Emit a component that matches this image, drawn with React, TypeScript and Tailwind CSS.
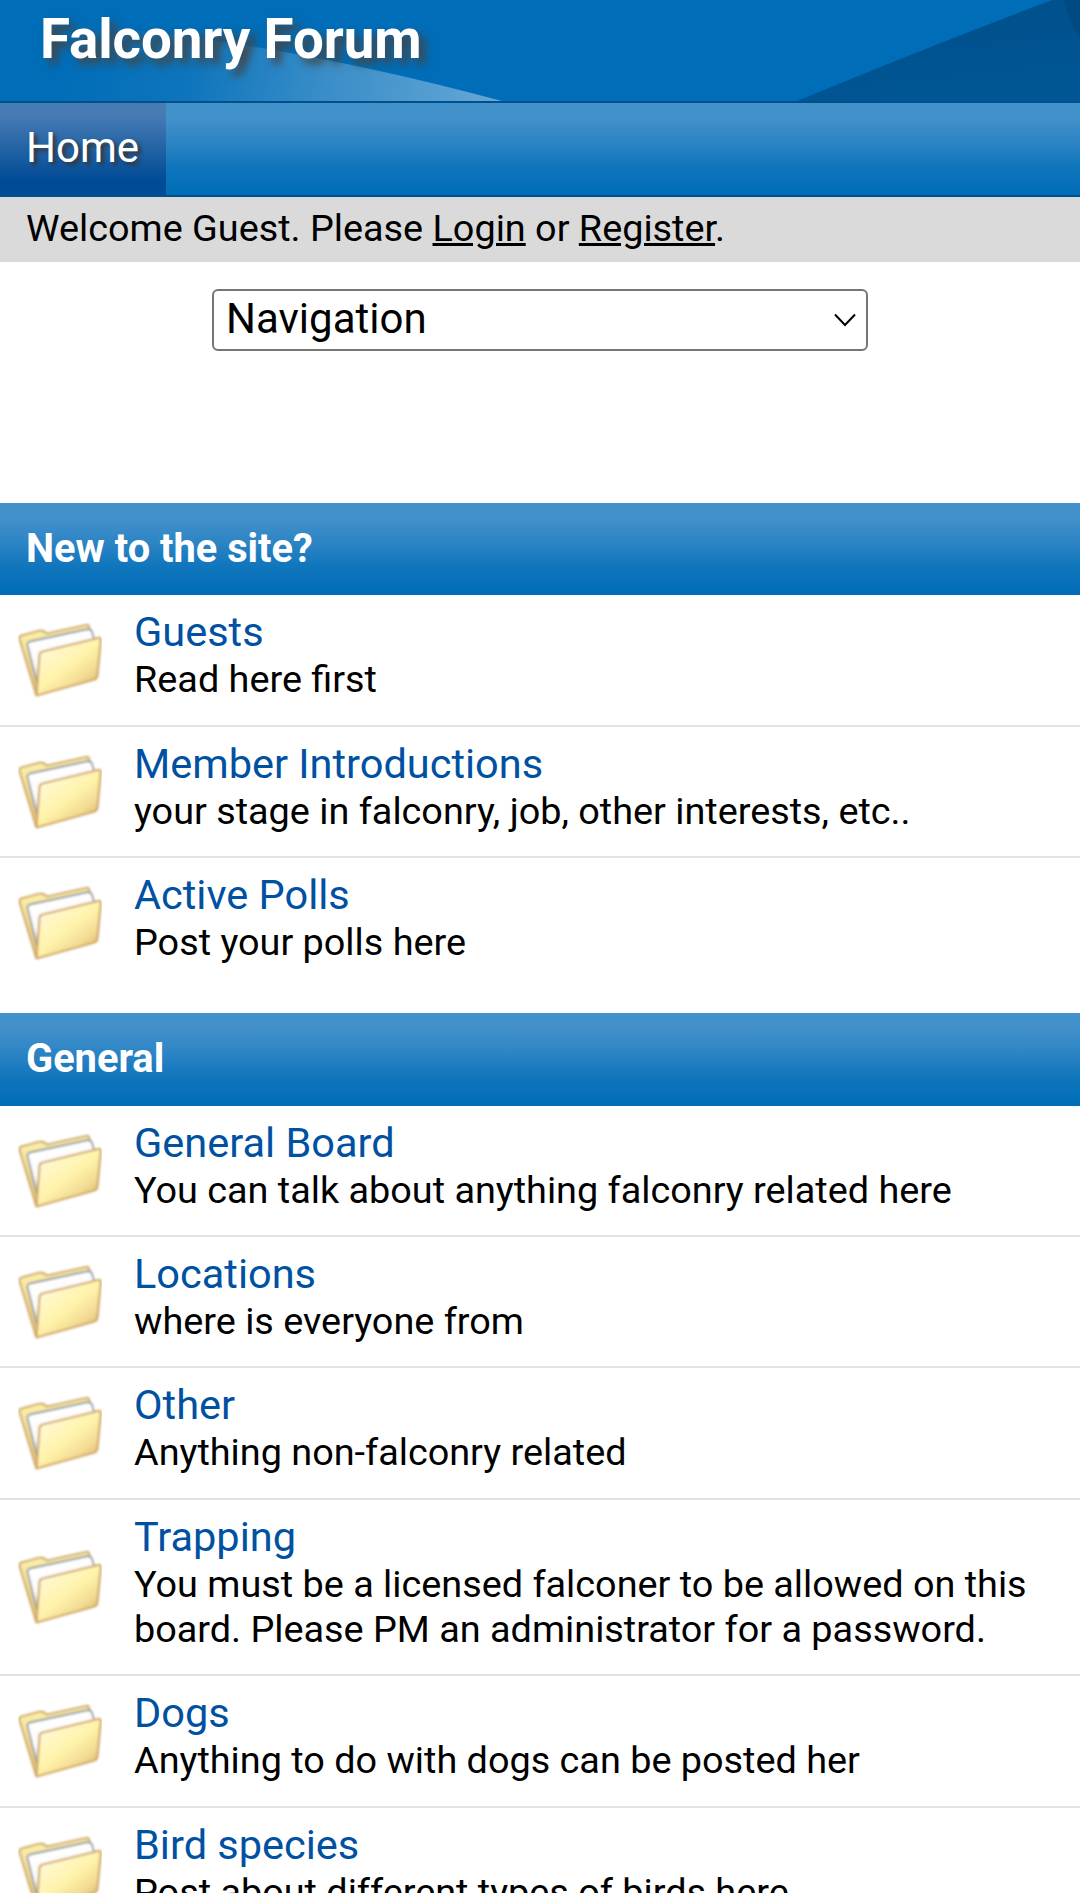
type Board = { name: string; desc: string }
type Category = { title: string; boards: Board[] }

const CATEGORIES: Category[] = [
  {
    title: "New to the site?",
    boards: [
      { name: "Guests", desc: "Read here first" },
      { name: "Member Introductions", desc: "your stage in falconry, job, other interests, etc.." },
      { name: "Active Polls", desc: "Post your polls here" },
    ],
  },
  {
    title: "General",
    boards: [
      { name: "General Board", desc: "You can talk about anything falconry related here" },
      { name: "Locations", desc: "where is everyone from" },
      { name: "Other", desc: "Anything non-falconry related" },
      { name: "Trapping", desc: "You must be a licensed falconer to be allowed on this board. Please PM an administrator for a password." },
      { name: "Dogs", desc: "Anything to do with dogs can be posted her" },
      { name: "Bird species", desc: "Post about different types of birds here" },
    ],
  },
]

const barClass = "bg-[linear-gradient(#4292cb_0%,#4190ca_18%,#2f86c5_40%,#0f75bc_70%,#006db8_100%)]"

// gradients shared by every folder icon
function FolderDefs() {
  return (
    <svg width="0" height="0" className="absolute">
      <defs>
        <linearGradient id="front" x1="0.1" y1="0" x2="0.95" y2="1">
          <stop offset="0" stopColor="#fffdf2" />
          <stop offset="0.2" stopColor="#fff7cc" />
          <stop offset="0.48" stopColor="#fff3aa" />
          <stop offset="0.7" stopColor="#f3dc94" />
          <stop offset="1" stopColor="#d2a35c" />
        </linearGradient>
        <linearGradient id="back" x1="0" y1="0" x2="0.2" y2="1">
          <stop offset="0" stopColor="#fff6b0" />
          <stop offset="1" stopColor="#e0be72" />
        </linearGradient>
        <linearGradient id="paper" x1="0" y1="0" x2="0.3" y2="1">
          <stop offset="0" stopColor="#f4f4f6" />
          <stop offset="0.2" stopColor="#ffffff" />
          <stop offset="0.65" stopColor="#fafafa" />
          <stop offset="1" stopColor="#b5b3ac" />
        </linearGradient>
        <filter id="soft" x="-5%" y="-5%" width="110%" height="110%"><feGaussianBlur stdDeviation="0.8" /></filter>
      </defs>
    </svg>
  )
}

function FolderIcon() {
  return (
    <svg viewBox="0 0 84 84" className="h-[84px] w-[84px] shrink-0">
      <g filter="url(#soft)" strokeLinejoin="round">
        <path d="M1.5 21Q1 18.5 3.500 17.500L20 13Q24 12 26 13.500L29 15.500L68 7Q71 6.500 71 9L73 20L18 76.500Z" fill="url(#back)" stroke="#d3b074" strokeWidth="2.200" />
        <path d="M9.500 27Q9 24.500 12 23.500L68 11.500Q73 10.500 74 14L77 24L19.500 67Z" fill="url(#paper)" stroke="#959ba5" strokeWidth="1.800" />
        <path d="M21.500 37Q21.500 34.500 24.500 33.500L80 20Q83 19.500 82.700 22.500L79.500 57Q79 60.500 76.500 61.500L18.500 77.500Z" fill="url(#front)" stroke="#d2ab6c" strokeWidth="2.200" />
      </g>
    </svg>
  )
}

function BoardRow({ board, last }: { board: Board; last: boolean }) {
  return (
    <li className={`flex items-center border-b-2 pl-[18px] pr-[27px] pt-[13px] pb-[22.15px] ${last ? "border-transparent" : "border-[#e4e4e4]"}`}>
      <div className="-mb-[10px] flex"><FolderIcon /></div>
      <div className="ml-[32px]">
        <a href="#" className="block text-[41.5px] leading-[48px] text-[#0051a2]">{board.name}</a>
        <p className="pt-[1px] text-[37.8px] leading-[45.2px]">{board.desc}</p>
      </div>
    </li>
  )
}

export default function App() {
  return (
    <div className="h-[1893px] overflow-hidden bg-white font-[Roboto,sans-serif] text-black">
      <FolderDefs />
      <header className="relative h-[101px] bg-[#006db8]">
        <svg viewBox="0 0 1080 101" className="absolute inset-0 h-full w-full">
          <defs>
            <linearGradient id="beam" gradientUnits="userSpaceOnUse" x1="60" y1="50" x2="500" y2="100">
              <stop offset="0" stopColor="#5fa3d3" stopOpacity="0" />
              <stop offset="0.3" stopColor="#5fa3d3" stopOpacity="0.15" />
              <stop offset="0.6" stopColor="#5fa3d3" stopOpacity="0.6" />
              <stop offset="1" stopColor="#66a8d6" />
            </linearGradient>
            <linearGradient id="shade" x1="0" y1="0" x2="0.3" y2="1">
              <stop offset="0" stopColor="#00508a" />
              <stop offset="1" stopColor="#005594" />
            </linearGradient>
          </defs>
          <path d="M0 20Q240 30 502 101H0Z" fill="url(#beam)" />
          <path d="M797 101Q935 44 1052 0H1080V101Z" fill="url(#shade)" />
          <path d="M1064 0Q1068 20 1080 38V0Z" fill="#004a82" />
        </svg>
        <h1 className="relative pl-[40px] pt-[6px] text-[54.7px] font-bold leading-[67px] tracking-[-0.1px] text-white [text-shadow:6px_6px_9px_#444]">Falconry Forum</h1>
      </header>

      <nav className={`flex h-[96px] border-y-2 border-[#00508c] ${barClass}`}>
        <a href="#" className="w-[166px] bg-[linear-gradient(#487cb4_0%,#457ab3_15%,#004b96_85%)] pl-[26px] text-[42px] leading-[89px] text-white [text-shadow:3px_3px_4px_#333]">Home</a>
      </nav>

      <div className="h-[65px] bg-[#dadada] pl-[26px] text-[37.8px] leading-[62px]">
        Welcome Guest. Please <a href="#" className="underline">Login</a> or <a href="#" className="underline">Register</a>.
      </div>

      <div className="flex h-[241px] justify-center pt-[27px]">
        <button type="button" className="flex h-[62px] w-[656px] items-center justify-between rounded-[6px] border-2 border-[#767676] bg-white pl-[12px] pr-[10px] text-[42px] leading-[58px]">
          <span className="-mt-[2px]">Navigation</span>
          <svg viewBox="0 0 22 14" className="h-[14px] w-[22px]" fill="none" stroke="#000" strokeWidth="2">
            <path d="M1 1.500L11 12L21 1.500" />
          </svg>
        </button>
      </div>

      {CATEGORIES.map((category) => (
        <section key={category.title} className="mb-[24.2px]">
          <h2 className={`h-[92.2px] pl-[26px] text-[39.8px] font-bold leading-[92px] text-white ${barClass}`}>{category.title}</h2>
          <ul>
            {category.boards.map((board, i) => (
              <BoardRow key={board.name} board={board} last={i === category.boards.length - 1} />
            ))}
          </ul>
        </section>
      ))}
    </div>
  )
}
